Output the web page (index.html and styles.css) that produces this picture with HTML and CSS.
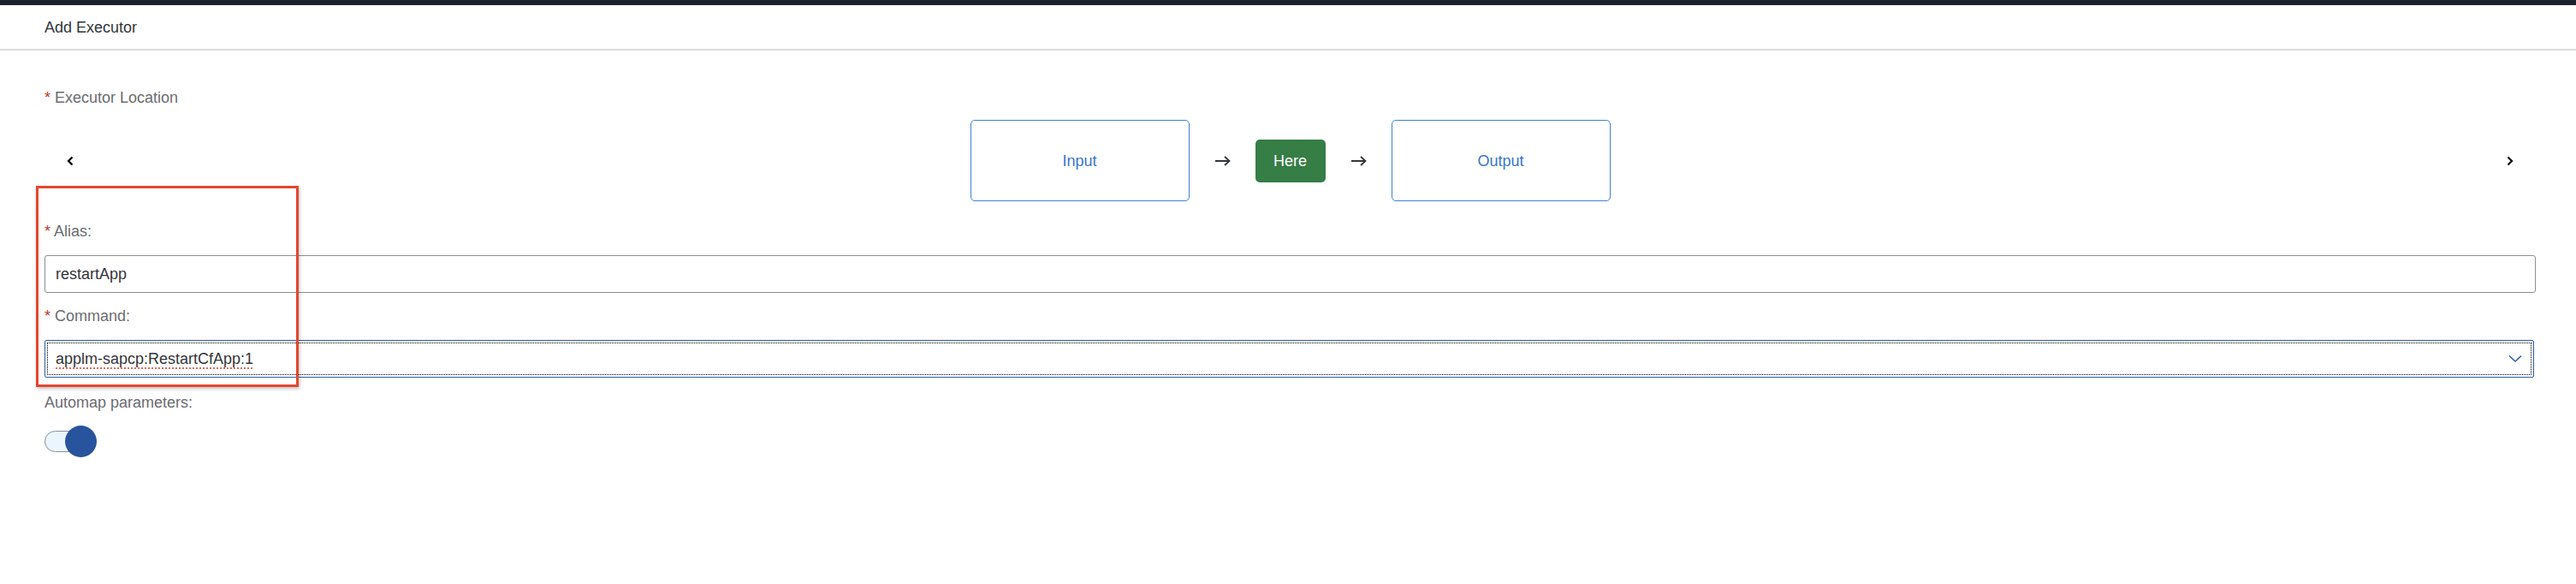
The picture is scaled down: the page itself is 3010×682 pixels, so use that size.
FILE: index.html
```html
<!DOCTYPE html>
<html>
<head>
<meta charset="utf-8">
<link rel="stylesheet" href="styles.css">
</head>
<body>
<div class="topbar"></div>
<header class="header"><span class="title">Add Executor</span></header>
<main class="content">
  <div class="label label-first"><span class="req">*</span> Executor Location</div>
  <div class="carousel">
    <span class="nav"><svg width="8" height="12" viewBox="0 0 8 12"><polyline points="6.5,1.5 2,6 6.5,10.5" fill="none" stroke="#000" stroke-width="2.2"/></svg></span>
    <div class="flow">
      <div class="step">Input</div>
      <svg class="arrow" width="19" height="12" viewBox="0 0 19 12"><path d="M1 6H17.5M12 1L17.5 6L12 11" fill="none" stroke="#32363a" stroke-width="1.8"/></svg>
      <div class="here">Here</div>
      <svg class="arrow" width="19" height="12" viewBox="0 0 19 12"><path d="M1 6H17.5M12 1L17.5 6L12 11" fill="none" stroke="#32363a" stroke-width="1.8"/></svg>
      <div class="step">Output</div>
    </div>
    <span class="nav"><svg width="8" height="12" viewBox="0 0 8 12"><polyline points="1.5,1.5 6,6 1.5,10.5" fill="none" stroke="#000" stroke-width="2.2"/></svg></span>
  </div>
  <div class="label label-alias"><span class="req">*</span> Alias:</div>
  <div class="field"><span class="value">restartApp</span></div>
  <div class="label"><span class="req">*</span> Command:</div>
  <div class="field select"><span class="value spell">applm-sapcp:RestartCfApp:1</span>
    <svg class="caret" width="16" height="10" viewBox="0 0 16 10"><polyline points="1,1.5 8,8 15,1.5" fill="none" stroke="#2a5ea8" stroke-width="1.6"/></svg>
  </div>
  <div class="label"> Automap parameters:</div>
  <div class="switch"><span class="track"></span><span class="knob"></span></div>
  <div class="highlight"></div>
</main>
</body>
</html>
```
FILE: styles.css
```css
* { box-sizing: border-box; }
html, body { margin: 0; padding: 0; background: #fff; }
body {
  font-family: "Liberation Sans", Arial, sans-serif;
  font-size: 18px;
  line-height: 22px;
  color: #32363a;
  width: 3010px;
  height: 682px;
  overflow: hidden;
}
.topbar { height: 6px; background: #1c222b; }
.header {
  height: 53px;
  border-bottom: 2px solid #dcdcdc;
  display: flex;
  align-items: center;
  padding-left: 52px;
}
.title { color: #32363a; }
.content {
  position: relative;
  padding: 0 47px 0 52px;
  display: flex;
  flex-direction: column;
  align-items: stretch;
}
.label { color: #6a6d70; height: 22px; }
.label-first { margin-top: 44px; }
.req { color: #c0392b; }
.carousel {
  margin-top: 15px;
  height: 95px;
  display: flex;
  align-items: center;
  justify-content: space-between;
  padding: 0 26px;
}
.nav { display: flex; width: 8px; height: 12px; }
.flow {
  display: flex;
  align-items: center;
}
.step {
  width: 256px;
  height: 95px;
  border: 1px solid #3f7fd6;
  border-radius: 5px;
  display: flex;
  align-items: center;
  justify-content: center;
  color: #3a74c8;
}
.arrow { margin: 0 29px; }
.here {
  width: 82px;
  height: 50px;
  background: #367d46;
  border-radius: 5px;
  color: #fff;
  display: flex;
  align-items: center;
  justify-content: center;
}
.label-alias { margin-top: 24px; }
.field {
  margin-top: 17px;
  margin-bottom: 16px;
  height: 44px;
  border: 1px solid #8c9096;
  border-radius: 3px;
  display: flex;
  align-items: center;
  padding-left: 12px;
  position: relative;
}
.select {
  border-color: #2a5ea8;
  border-radius: 2px;
  margin-right: 2px;
  margin-bottom: 18px;
}
.select::after {
  content: "";
  position: absolute;
  inset: 2px;
  border: 1px dotted #000;
}
.spell {
  text-decoration-line: underline;
  text-decoration-style: dotted;
  text-decoration-color: #e8685c;
  text-decoration-thickness: 2px;
  text-underline-offset: 4px;
}
.caret { margin-left: auto; margin-right: 13px; }
.switch {
  margin-top: 16px;
  position: relative;
  width: 61px;
  height: 37px;
  display: flex;
  align-items: center;
}
.track {
  width: 52px;
  height: 25px;
  border: 1px solid #89919a;
  border-radius: 13px;
  background: #ebf5fe;
}
.knob {
  position: absolute;
  left: 24px;
  top: 0;
  width: 37px;
  height: 37px;
  border-radius: 50%;
  background: #27549c;
}
.highlight {
  position: absolute;
  left: 42px;
  top: 158px;
  width: 307px;
  height: 235px;
  border: 3px solid #e5472d;
  box-shadow: 1px 2px 4px rgba(0,0,0,0.25);
  pointer-events: none;
}
```
